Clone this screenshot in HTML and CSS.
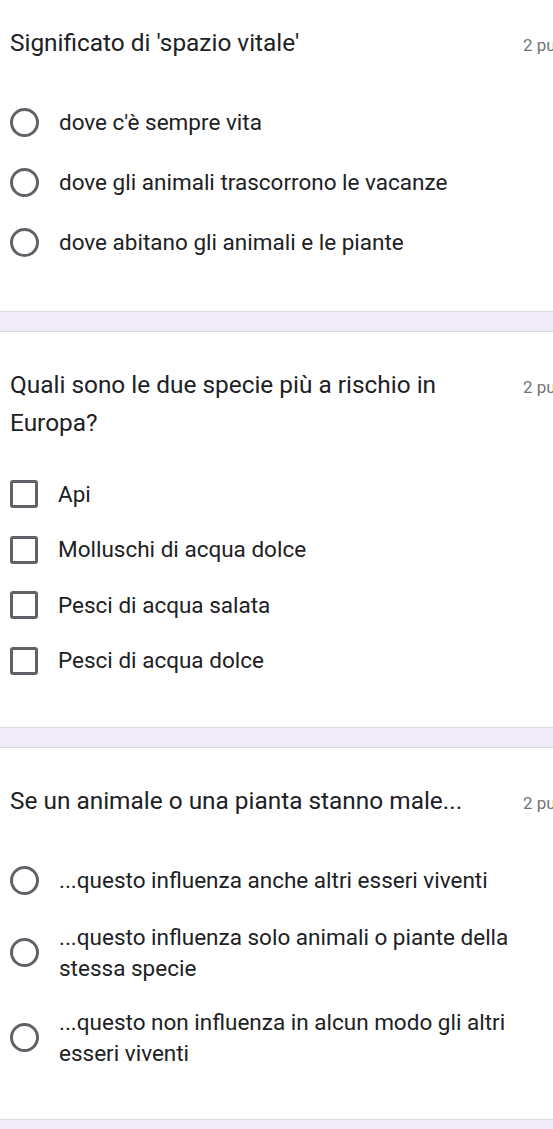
FILE: index.html
```html
<!DOCTYPE html>
<html lang="it">
<head>
<meta charset="utf-8">
<title>Quiz</title>
<link rel="stylesheet" href="styles.css">
</head>
<body>
<main class="form">
  <section class="question">
    <div class="qhead">
      <div class="qtitle">Significato di 'spazio vitale'</div>
      <div class="points">2 punti</div>
    </div>
    <div class="options radios">
      <label class="option"><span class="radio"></span><span class="otext">dove c'è sempre vita</span></label>
      <label class="option"><span class="radio"></span><span class="otext">dove gli animali trascorrono le vacanze</span></label>
      <label class="option"><span class="radio"></span><span class="otext">dove abitano gli animali e le piante</span></label>
    </div>
  </section>
  <div class="divider"></div>
  <section class="question">
    <div class="qhead">
      <div class="qtitle">Quali sono le due specie più a rischio in Europa?</div>
      <div class="points">2 punti</div>
    </div>
    <div class="options checks">
      <label class="option"><span class="check"></span><span class="otext">Api</span></label>
      <label class="option"><span class="check"></span><span class="otext">Molluschi di acqua dolce</span></label>
      <label class="option"><span class="check"></span><span class="otext">Pesci di acqua salata</span></label>
      <label class="option"><span class="check"></span><span class="otext">Pesci di acqua dolce</span></label>
    </div>
  </section>
  <div class="divider"></div>
  <section class="question">
    <div class="qhead">
      <div class="qtitle">Se un animale o una pianta stanno male...</div>
      <div class="points">2 punti</div>
    </div>
    <div class="options radios">
      <label class="option"><span class="radio"></span><span class="otext">...questo influenza anche altri esseri viventi</span></label>
      <label class="option"><span class="radio"></span><span class="otext">...questo influenza solo animali o piante della stessa specie</span></label>
      <label class="option"><span class="radio"></span><span class="otext">...questo non influenza in alcun modo gli altri esseri viventi</span></label>
    </div>
  </section>
  <div class="divider"></div>
</main>
</body>
</html>
```

FILE: styles.css
```css
html, body {
  margin: 0;
  padding: 0;
  background: #ffffff;
  overflow: hidden;
}

body {
  font-family: Roboto, "Liberation Sans", Arial, sans-serif;
  color: #202124;
}

.form {
  width: 553px;
}

.question {
  padding: 34px 0 39px 10px;
}

.question:first-child {
  padding-top: 24px;
}

.qhead {
  display: flex;
  align-items: baseline;
  width: 600px;
}

.qtitle {
  width: 501px;
  font-size: 24.4px;
  line-height: 38px;
  color: #202124;
}

.points {
  margin-left: 12px;
  font-size: 17px;
  color: #70757a;
  white-space: nowrap;
}

.options {
  display: flex;
  flex-direction: column;
}

.radios {
  margin-top: 30px;
}

.checks {
  margin-top: 24.25px;
}

.option {
  display: flex;
  align-items: center;
  min-height: 37px;
}

.radios .option {
  padding: 11.5px 0;
}

.checks .option {
  padding: 9.25px 0;
}

.otext {
  font-size: 22.5px;
  line-height: 31px;
  width: 470px;
}

.radio {
  flex: none;
  box-sizing: border-box;
  width: 29px;
  height: 29px;
  border: 3px solid #5f6368;
  border-radius: 50%;
  margin-right: 20px;
}

.check {
  flex: none;
  box-sizing: border-box;
  width: 28px;
  height: 28px;
  border: 3px solid #5f6368;
  border-radius: 3px;
  margin-right: 20px;
}

.divider {
  height: 19px;
  background: #f0ebf8;
  border-top: 1px solid #dadce0;
  border-bottom: 1px solid #dadce0;
}
```
